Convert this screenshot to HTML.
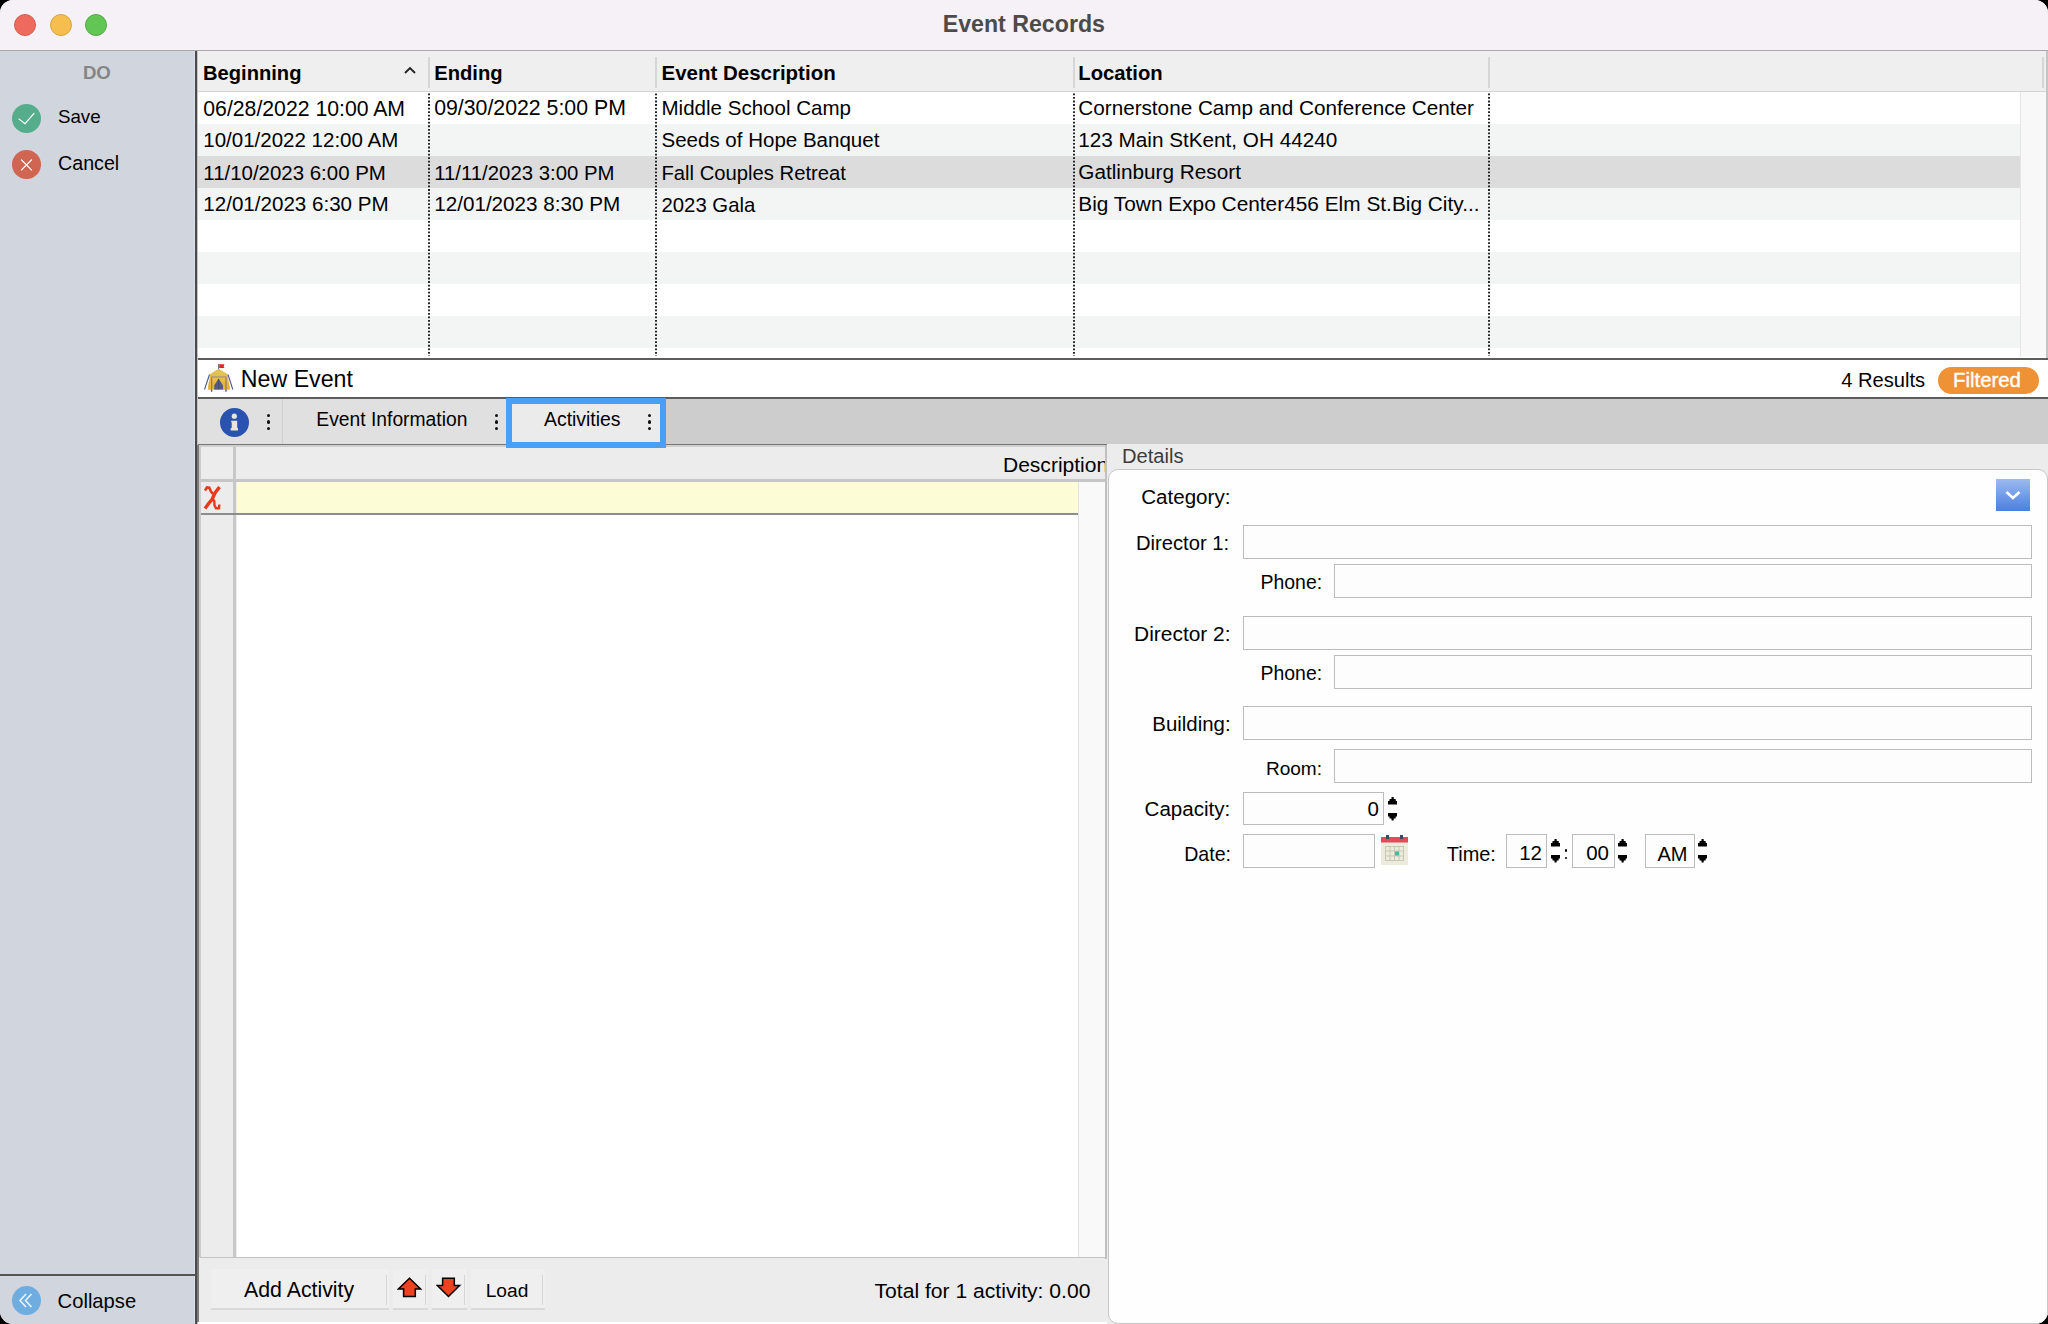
<!DOCTYPE html>
<html><head><meta charset="utf-8"><title>Event Records</title>
<style>
html,body{margin:0;padding:0;width:2048px;height:1324px;overflow:hidden;background:#000}
#w{position:absolute;left:0;top:0;width:2048px;height:1324px;overflow:hidden;border-radius:13px;background:#ececec}
#w div,#w span.t{position:absolute}
.t{font-family:"Liberation Sans",sans-serif;line-height:1;white-space:pre}
</style></head><body><div id="w">
<div style="left:0px;top:0px;width:2048px;height:50px;background:#f6f1f6"></div>
<div style="left:0px;top:50px;width:2048px;height:1px;background:#a9a9ab"></div>
<div style="left:14px;top:14px;width:22px;height:22px;border-radius:50%;background:#ee6a5f;box-sizing:border-box;border:1px solid #d65a4f"></div>
<div style="left:49.5px;top:14px;width:22px;height:22px;border-radius:50%;background:#f5be4f;box-sizing:border-box;border:1px solid #d9a23c"></div>
<div style="left:85px;top:14px;width:22px;height:22px;border-radius:50%;background:#62c655;box-sizing:border-box;border:1px solid #52a843"></div>
<span class="t" style="left:942.70px;top:12.50px;font-size:23.18px;font-weight:700;color:#4b4b4b;">Event Records</span>
<div style="left:0px;top:51px;width:196px;height:1273px;background:#d1d5de"></div>
<div style="left:194px;top:51px;width:1px;height:1273px;background:#dde0e8"></div>
<div style="left:195px;top:51px;width:2px;height:1273px;background:#4a4a4a"></div>
<div style="left:197px;top:51px;width:2px;height:1273px;background:#c4c4c4"></div>
<span class="t" style="left:82.90px;top:64.13px;font-size:18.67px;font-weight:700;color:#858585;">DO</span>
<div style="left:12px;top:104px;width:29px;height:29px;border-radius:50%;background:#56ad8b"></div>
<svg style="position:absolute;left:12px;top:104px" width="29" height="29"><path d="M6.6 14.6 L13 19.7 L22.3 9.2" stroke="#fff" stroke-width="1.2" fill="none"/></svg>
<span class="t" style="left:57.90px;top:108.37px;font-size:18.74px;color:#000;">Save</span>
<div style="left:12px;top:150px;width:29px;height:29px;border-radius:50%;background:#d06552"></div>
<svg style="position:absolute;left:12px;top:150px" width="29" height="29"><path d="M9.1 9.5 L19.9 20.3 M19.9 9.5 L9.1 20.3" stroke="#fff" stroke-width="1.2" fill="none"/></svg>
<span class="t" style="left:58.00px;top:153.89px;font-size:19.66px;color:#000;">Cancel</span>
<div style="left:0px;top:1274px;width:196px;height:2px;background:#555"></div>
<div style="left:12px;top:1286px;width:29px;height:29px;border-radius:50%;background:#6fade0"></div>
<svg style="position:absolute;left:12px;top:1286px" width="29" height="29"><path d="M14 8 L8 14.5 L14 21 M19.5 8 L13.5 14.5 L19.5 21" stroke="#eef5fb" stroke-width="1.5" fill="none"/></svg>
<span class="t" style="left:57.60px;top:1290.73px;font-size:20.20px;color:#000;">Collapse</span>
<div style="left:198px;top:51px;width:1850px;height:307px;background:#fff"></div>
<div style="left:198px;top:51px;width:1848px;height:41px;background:#efefef"></div>
<div style="left:198px;top:91px;width:1848px;height:1px;background:#d3d3d3"></div>
<div style="left:198px;top:92px;width:1822px;height:32px;background:#ffffff"></div>
<div style="left:198px;top:124px;width:1822px;height:32px;background:#f3f4f4"></div>
<div style="left:198px;top:156px;width:1822px;height:32px;background:#dcdcdc"></div>
<div style="left:198px;top:188px;width:1822px;height:32px;background:#f3f4f4"></div>
<div style="left:198px;top:220px;width:1822px;height:32px;background:#ffffff"></div>
<div style="left:198px;top:252px;width:1822px;height:32px;background:#f3f4f4"></div>
<div style="left:198px;top:284px;width:1822px;height:32px;background:#ffffff"></div>
<div style="left:198px;top:316px;width:1822px;height:32px;background:#f3f4f4"></div>
<div style="left:198px;top:348px;width:1822px;height:9px;background:#ffffff"></div>
<div style="left:2020px;top:92px;width:26px;height:265px;background:#f8f8f8"></div>
<div style="left:2020px;top:92px;width:1px;height:265px;background:#e6e6e6"></div>
<div style="left:2046px;top:51px;width:2px;height:307px;background:#c4c4c4"></div>
<div style="left:428px;top:57px;width:2px;height:31px;background:#d6d6d6"></div>
<svg style="position:absolute;left:427px;top:93px" width="4" height="263"><line x1="2" y1="0.5" x2="2" y2="263" stroke="#111" stroke-width="1.8" stroke-dasharray="1.8 1.74"/></svg>
<div style="left:655px;top:57px;width:2px;height:31px;background:#d6d6d6"></div>
<svg style="position:absolute;left:654px;top:93px" width="4" height="263"><line x1="2" y1="0.5" x2="2" y2="263" stroke="#111" stroke-width="1.8" stroke-dasharray="1.8 1.74"/></svg>
<div style="left:1073px;top:57px;width:2px;height:31px;background:#d6d6d6"></div>
<svg style="position:absolute;left:1072px;top:93px" width="4" height="263"><line x1="2" y1="0.5" x2="2" y2="263" stroke="#111" stroke-width="1.8" stroke-dasharray="1.8 1.74"/></svg>
<div style="left:1488px;top:57px;width:2px;height:31px;background:#d6d6d6"></div>
<svg style="position:absolute;left:1487px;top:93px" width="4" height="263"><line x1="2" y1="0.5" x2="2" y2="263" stroke="#111" stroke-width="1.8" stroke-dasharray="1.8 1.74"/></svg>
<div style="left:2042px;top:57px;width:2px;height:31px;background:#d6d6d6"></div>
<span class="t" style="left:203.00px;top:62.87px;font-size:20.15px;font-weight:700;color:#000;">Beginning</span>
<svg style="position:absolute;left:402px;top:64px" width="16" height="12"><path d="M3 9 L8 4 L13 9" stroke="#222" stroke-width="1.8" fill="none"/></svg>
<span class="t" style="left:434.20px;top:62.83px;font-size:20.20px;font-weight:700;color:#000;">Ending</span>
<span class="t" style="left:661.50px;top:62.58px;font-size:20.49px;font-weight:700;color:#000;">Event Description</span>
<span class="t" style="left:1078.30px;top:62.78px;font-size:20.25px;font-weight:700;color:#000;">Location</span>
<span class="t" style="left:203.30px;top:97.85px;font-size:21.23px;color:#000;">06/28/2022 10:00 AM</span>
<span class="t" style="left:434.20px;top:97.80px;font-size:21.29px;color:#000;">09/30/2022 5:00 PM</span>
<span class="t" style="left:661.50px;top:98.44px;font-size:20.54px;color:#000;">Middle School Camp</span>
<span class="t" style="left:1078.30px;top:98.32px;font-size:20.69px;color:#000;">Cornerstone Camp and Conference Center</span>
<span class="t" style="left:203.30px;top:130.48px;font-size:20.50px;color:#000;">10/01/2022 12:00 AM</span>
<span class="t" style="left:661.50px;top:130.45px;font-size:20.53px;color:#000;">Seeds of Hope Banquet</span>
<span class="t" style="left:1078.30px;top:130.29px;font-size:20.71px;color:#000;">123 Main StKent, OH 44240</span>
<span class="t" style="left:203.30px;top:162.51px;font-size:20.46px;color:#000;">11/10/2023 6:00 PM</span>
<span class="t" style="left:434.20px;top:162.59px;font-size:20.37px;color:#000;">11/11/2023 3:00 PM</span>
<span class="t" style="left:661.50px;top:162.69px;font-size:20.24px;color:#000;">Fall Couples Retreat</span>
<span class="t" style="left:1078.30px;top:162.26px;font-size:20.75px;color:#000;">Gatlinburg Resort</span>
<span class="t" style="left:203.30px;top:194.40px;font-size:20.58px;color:#000;">12/01/2023 6:30 PM</span>
<span class="t" style="left:434.20px;top:194.33px;font-size:20.67px;color:#000;">12/01/2023 8:30 PM</span>
<span class="t" style="left:661.50px;top:194.61px;font-size:20.34px;color:#000;">2023 Gala</span>
<span class="t" style="left:1078.30px;top:194.18px;font-size:20.85px;color:#000;">Big Town Expo Center456 Elm St.Big City...</span>
<div style="left:198px;top:358px;width:1850px;height:2px;background:#5c5c5c"></div>
<div style="left:198px;top:360px;width:1850px;height:37px;background:#fff"></div>
<div style="left:198px;top:397px;width:1850px;height:2px;background:#5c5c5c"></div>
<span class="t" style="left:240.80px;top:367.69px;font-size:23.19px;color:#000;">New Event</span>
<span class="t" style="left:1841.20px;top:369.57px;font-size:20.15px;color:#000;">4 Results</span>
<div style="left:1938px;top:367px;width:101px;height:27px;border-radius:13.5px;background:#ef9236"></div>
<span class="t" style="left:1953.00px;top:370.07px;font-size:20.39px;color:#fff;-webkit-text-stroke:0.4px #fff">Filtered</span>
<div style="left:198px;top:399px;width:1850px;height:45px;background:#cdcdcd"></div>
<div style="left:198px;top:399px;width:308px;height:45px;background:#e0e0e0"></div>
<div style="left:282px;top:399px;width:1px;height:45px;background:#cfcfcf"></div>
<div style="left:220px;top:408px;width:29px;height:29px;border-radius:50%;background:#2a52b0"></div>
<div style="left:266.5px;top:413.7px;width:3.4px;height:3.4px;border-radius:50%;background:#111"></div>
<div style="left:495.1px;top:413.7px;width:3.4px;height:3.4px;border-radius:50%;background:#111"></div>
<div style="left:266.5px;top:420.2px;width:3.4px;height:3.4px;border-radius:50%;background:#111"></div>
<div style="left:495.1px;top:420.2px;width:3.4px;height:3.4px;border-radius:50%;background:#111"></div>
<div style="left:266.5px;top:426.7px;width:3.4px;height:3.4px;border-radius:50%;background:#111"></div>
<div style="left:495.1px;top:426.7px;width:3.4px;height:3.4px;border-radius:50%;background:#111"></div>
<span class="t" style="left:316.30px;top:409.60px;font-size:19.29px;color:#000;">Event Information</span>
<div style="left:198px;top:444px;width:909px;height:1px;background:#777"></div>
<div style="left:198px;top:445px;width:909px;height:879px;background:#ececec"></div>
<div style="left:198px;top:445px;width:909px;height:2px;background:#cfcfcf"></div>
<div style="left:197px;top:445px;width:2px;height:877px;background:#7b7b7b"></div>
<div style="left:199px;top:447px;width:2px;height:810px;background:#cbcbcb"></div>
<div style="left:233px;top:447px;width:3px;height:810px;background:#c8c8c8"></div>
<div style="left:200px;top:479px;width:905px;height:3px;background:#c6c6c6"></div>
<div style="left:237px;top:482px;width:841px;height:31px;background:#fcfcd6"></div>
<div style="left:201px;top:513px;width:877px;height:2px;background:#8c8c8c"></div>
<div style="left:237px;top:515px;width:841px;height:742px;background:#fff"></div>
<div style="left:1078px;top:482px;width:27px;height:775px;background:#f9f9f9"></div>
<div style="left:1078px;top:482px;width:1px;height:775px;background:#e2e2e2"></div>
<div style="left:1105px;top:445px;width:1.5px;height:814px;background:#c0c0c0"></div>
<div style="left:1106.5px;top:445px;width:1.5px;height:879px;background:#fafafa"></div>
<div style="left:200px;top:1257px;width:905px;height:1px;background:#c2c2c2"></div>
<div style="left:198px;top:1322px;width:909px;height:2px;background:#fff"></div>
<div style="left:1000px;top:447px;width:105px;height:32px;overflow:hidden"><span class="t" style="left:3.00px;top:6.92px;font-size:21.03px">Description</span></div>
<div style="left:211px;top:1269px;width:178px;height:40px;background:#efefef"></div>
<div style="left:211px;top:1308px;width:178px;height:2px;background:#d9d9d9"></div>
<div style="left:386px;top:1275px;width:1px;height:30px;background:#d6d6d6"></div>
<div style="left:393px;top:1269px;width:35px;height:40px;background:#efefef"></div>
<div style="left:393px;top:1308px;width:35px;height:2px;background:#d9d9d9"></div>
<div style="left:425px;top:1275px;width:1px;height:30px;background:#d6d6d6"></div>
<div style="left:432px;top:1269px;width:35px;height:40px;background:#efefef"></div>
<div style="left:432px;top:1308px;width:35px;height:2px;background:#d9d9d9"></div>
<div style="left:464px;top:1275px;width:1px;height:30px;background:#d6d6d6"></div>
<div style="left:471px;top:1269px;width:74px;height:40px;background:#efefef"></div>
<div style="left:471px;top:1308px;width:74px;height:2px;background:#d9d9d9"></div>
<div style="left:542px;top:1275px;width:1px;height:30px;background:#d6d6d6"></div>
<span class="t" style="left:244.00px;top:1279.88px;font-size:21.32px;color:#000;">Add Activity</span>
<span class="t" style="left:485.70px;top:1280.89px;font-size:19.19px;color:#000;">Load</span>
<span class="t" style="left:874.50px;top:1279.75px;font-size:21.12px;color:#000;">Total for 1 activity: 0.00</span>
<svg style="position:absolute;left:397px;top:1277px" width="26" height="22"><path d="M12.5 1.3 L23.6 12 L18.3 12 L18.3 19.5 L6.6 19.5 L6.6 12 L1.4 12 Z" fill="#ec4220" stroke="#000" stroke-width="1.5" stroke-linejoin="miter"/></svg>
<svg style="position:absolute;left:436px;top:1277px" width="26" height="22"><path d="M6.6 1.3 L18.3 1.3 L18.3 8.6 L23.6 8.6 L12.5 19.5 L1.4 8.6 L6.6 8.6 Z" fill="#ec4220" stroke="#000" stroke-width="1.5" stroke-linejoin="miter"/></svg>
<svg style="position:absolute;left:198px;top:480px" width="36" height="34"><g fill="none" stroke="#e8391c" stroke-linejoin="miter"><path d="M21.5 7 L17 13 L14 19.5 L11 23 L7 28.5" stroke-width="3.4"/><path d="M7 10.5 L9 7.5 L11.3 7.8 L13 11.5 L15 14" stroke-width="2.6"/><path d="M15 19.5 L16.3 21 L16.5 25.5 L18 28.2 L21 28.2 L21.3 24.5" stroke-width="2.4"/></g></svg>
<div style="left:506px;top:398px;width:160px;height:50px;box-sizing:border-box;border:6px solid #4a9ff5;background:#ebebeb"></div>
<div style="left:647.5px;top:413.7px;width:3.4px;height:3.4px;border-radius:50%;background:#111"></div>
<div style="left:647.5px;top:420.2px;width:3.4px;height:3.4px;border-radius:50%;background:#111"></div>
<div style="left:647.5px;top:426.7px;width:3.4px;height:3.4px;border-radius:50%;background:#111"></div>
<span class="t" style="left:544.00px;top:409.50px;font-size:19.42px;color:#000;">Activities</span>
<div style="left:1107px;top:445px;width:941px;height:879px;background:#ececec"></div>
<span class="t" style="left:1122.00px;top:445.97px;font-size:20.15px;color:#3c3c3c;">Details</span>
<div style="left:1108px;top:469px;width:940px;height:855px;box-sizing:border-box;border:1.5px solid #c6c6c6;border-radius:10px;background:#fefefe"></div>
<span class="t" style="left:1141.20px;top:486.91px;font-size:20.58px;color:#000;">Category:</span>
<div style="left:1996px;top:479px;width:34px;height:32px;background:linear-gradient(#9dbaf0,#4a7fe2)"></div>
<svg style="position:absolute;left:1996px;top:479px" width="34" height="32"><path d="M10.5 13 L17 19 L23.5 13" stroke="#fff" stroke-width="2.6" fill="none"/></svg>
<span class="t" style="left:1136.00px;top:533.42px;font-size:20.21px;color:#000;">Director 1:</span>
<div style="left:1243px;top:525px;width:789px;height:34px;box-sizing:border-box;border:1.5px solid #bcbcbc;background:#fdfdfd"></div>
<span class="t" style="left:1260.50px;top:573.28px;font-size:19.44px;color:#000;">Phone:</span>
<div style="left:1334px;top:564px;width:698px;height:34px;box-sizing:border-box;border:1.5px solid #bcbcbc;background:#fdfdfd"></div>
<span class="t" style="left:1134.10px;top:623.71px;font-size:20.92px;color:#000;">Director 2:</span>
<div style="left:1243px;top:616px;width:789px;height:34px;box-sizing:border-box;border:1.5px solid #bcbcbc;background:#fdfdfd"></div>
<span class="t" style="left:1260.50px;top:663.88px;font-size:19.44px;color:#000;">Phone:</span>
<div style="left:1334px;top:655px;width:698px;height:34px;box-sizing:border-box;border:1.5px solid #bcbcbc;background:#fdfdfd"></div>
<span class="t" style="left:1152.30px;top:713.85px;font-size:20.41px;color:#000;">Building:</span>
<div style="left:1243px;top:706px;width:789px;height:34px;box-sizing:border-box;border:1.5px solid #bcbcbc;background:#fdfdfd"></div>
<span class="t" style="left:1265.90px;top:758.51px;font-size:19.05px;color:#000;">Room:</span>
<div style="left:1334px;top:749px;width:698px;height:34px;box-sizing:border-box;border:1.5px solid #bcbcbc;background:#fdfdfd"></div>
<span class="t" style="left:1144.60px;top:799.22px;font-size:20.56px;color:#000;">Capacity:</span>
<div style="left:1243px;top:792px;width:141px;height:33px;box-sizing:border-box;border:1.5px solid #bcbcbc;background:#fdfdfd"></div>
<span class="t" style="left:1367.60px;top:798.58px;font-size:20.50px;color:#000;">0</span>
<span class="t" style="left:1184.20px;top:844.76px;font-size:19.58px;color:#000;">Date:</span>
<div style="left:1243px;top:834px;width:132px;height:34px;box-sizing:border-box;border:1.5px solid #bcbcbc;background:#fdfdfd"></div>
<span class="t" style="left:1446.80px;top:844.56px;font-size:19.94px;color:#000;">Time:</span>
<div style="left:1506px;top:834px;width:41px;height:34px;box-sizing:border-box;border:1.5px solid #bcbcbc;background:#fdfdfd"></div>
<div style="left:1572px;top:834px;width:43px;height:34px;box-sizing:border-box;border:1.5px solid #bcbcbc;background:#fdfdfd"></div>
<div style="left:1645px;top:834px;width:50px;height:34px;box-sizing:border-box;border:1.5px solid #bcbcbc;background:#fdfdfd"></div>
<span class="t" style="left:1519.20px;top:843.08px;font-size:20.50px;color:#000;">12</span>
<span class="t" style="left:1586.20px;top:843.08px;font-size:20.50px;color:#000;">00</span>
<span class="t" style="left:1657.40px;top:843.50px;font-size:20.00px;color:#000;">AM</span>
<div style="left:1564.8px;top:849.3px;width:2.4px;height:2.4px;background:#000;border-radius:50%"></div>
<div style="left:1564.8px;top:856.7px;width:2.4px;height:2.4px;background:#000;border-radius:50%"></div>
<svg style="position:absolute;left:1387.5px;top:797px" width="10" height="24"><path d="M3.6 0 L5.6 0 L5.8 2 L7.6 2 L7.8 4 L9 4 L9 7.4 L0 7.4 L0 4 L1.4 4 L1.6 2 L3.4 2 Z M0 16 L9 16 L9 19.4 L7.8 19.4 L7.6 21.4 L5.8 21.4 L5.6 23.6 L3.6 23.6 L3.4 21.4 L1.6 21.4 L1.4 19.4 L0 19.4 Z" fill="#000"/></svg>
<svg style="position:absolute;left:1551px;top:839.2px" width="10" height="24"><path d="M3.6 0 L5.6 0 L5.8 2 L7.6 2 L7.8 4 L9 4 L9 7.4 L0 7.4 L0 4 L1.4 4 L1.6 2 L3.4 2 Z M0 16 L9 16 L9 19.4 L7.8 19.4 L7.6 21.4 L5.8 21.4 L5.6 23.6 L3.6 23.6 L3.4 21.4 L1.6 21.4 L1.4 19.4 L0 19.4 Z" fill="#000"/></svg>
<svg style="position:absolute;left:1618.3px;top:839.2px" width="10" height="24"><path d="M3.6 0 L5.6 0 L5.8 2 L7.6 2 L7.8 4 L9 4 L9 7.4 L0 7.4 L0 4 L1.4 4 L1.6 2 L3.4 2 Z M0 16 L9 16 L9 19.4 L7.8 19.4 L7.6 21.4 L5.8 21.4 L5.6 23.6 L3.6 23.6 L3.4 21.4 L1.6 21.4 L1.4 19.4 L0 19.4 Z" fill="#000"/></svg>
<svg style="position:absolute;left:1698.4px;top:839.2px" width="10" height="24"><path d="M3.6 0 L5.6 0 L5.8 2 L7.6 2 L7.8 4 L9 4 L9 7.4 L0 7.4 L0 4 L1.4 4 L1.6 2 L3.4 2 Z M0 16 L9 16 L9 19.4 L7.8 19.4 L7.6 21.4 L5.8 21.4 L5.6 23.6 L3.6 23.6 L3.4 21.4 L1.6 21.4 L1.4 19.4 L0 19.4 Z" fill="#000"/></svg>
<svg style="position:absolute;left:1381px;top:835px" width="28" height="30">
<rect x="0" y="2" width="27" height="28" fill="#ecebdc"/>
<rect x="0" y="2" width="27" height="5.5" fill="#e24b5b"/>
<rect x="5" y="0" width="3" height="4" fill="#3a4a60"/><rect x="19" y="0" width="3" height="4" fill="#3a4a60"/>
<g stroke="#c9c7b3" stroke-width="1" fill="none"><rect x="4.5" y="11.5" width="18" height="14"/>
<line x1="9" y1="11.5" x2="9" y2="25.5"/><line x1="13.5" y1="11.5" x2="13.5" y2="25.5"/><line x1="18" y1="11.5" x2="18" y2="25.5"/>
<line x1="4.5" y1="16" x2="22.5" y2="16"/><line x1="4.5" y1="21" x2="22.5" y2="21"/></g>
<rect x="14" y="16.5" width="4" height="4" fill="#46b8a0"/></svg>
<svg style="position:absolute;left:200px;top:360px" width="40" height="36">
<line x1="18.6" y1="4" x2="18.6" y2="9.5" stroke="#6c7078" stroke-width="1.1"/>
<path d="M19.2 4.2 L24.5 4.2 L23.6 6.2 L24.5 8 L19.2 8 Z" fill="#d42a20"/>
<path d="M18.6 9 L27.5 14.2 L30 29.5 L7.8 29.5 L10 14.2 Z" fill="#e8be45"/>
<path d="M18.6 9 L27.5 14.2 L10 14.2 Z" fill="#e2c255"/>
<path d="M9 22 L28.5 22 L30 29.5 L7.8 29.5 Z" fill="#e9b23c"/>
<rect x="11" y="16" width="15.6" height="1.9" fill="#b7a27a"/>
<rect x="11" y="17.5" width="1.2" height="12" fill="#8a8068"/><rect x="25.4" y="17.5" width="1.2" height="12" fill="#8a8068"/>
<path d="M11.6 29.5 L11.6 31.8 M26 29.5 L26 31.8" stroke="#4a5888" stroke-width="1.4"/>
<path d="M18.6 18.5 L23 25.5 L23 29.4 L14.2 29.4 L14.2 25.5 Z" fill="#535c86"/>
<line x1="18.6" y1="19" x2="18.6" y2="29.4" stroke="#434a70" stroke-width="0.8"/>
<path d="M9.5 14.5 L4.5 29.5 M28 14.5 L32.8 29.5" stroke="#505a88" stroke-width="1.1"/>
</svg>
<svg style="position:absolute;left:220px;top:408px" width="29" height="29"><circle cx="14.3" cy="8.2" r="2.6" fill="#e9e5dc"/><path d="M11.2 12.7 L17.2 12.7 L17.2 20 L18 20 L18 22.6 L10.7 22.6 L10.7 20 L11.7 20 L11.7 14.3 L11.2 14.3 Z" fill="#e9e5dc"/></svg>
</div></body></html>
